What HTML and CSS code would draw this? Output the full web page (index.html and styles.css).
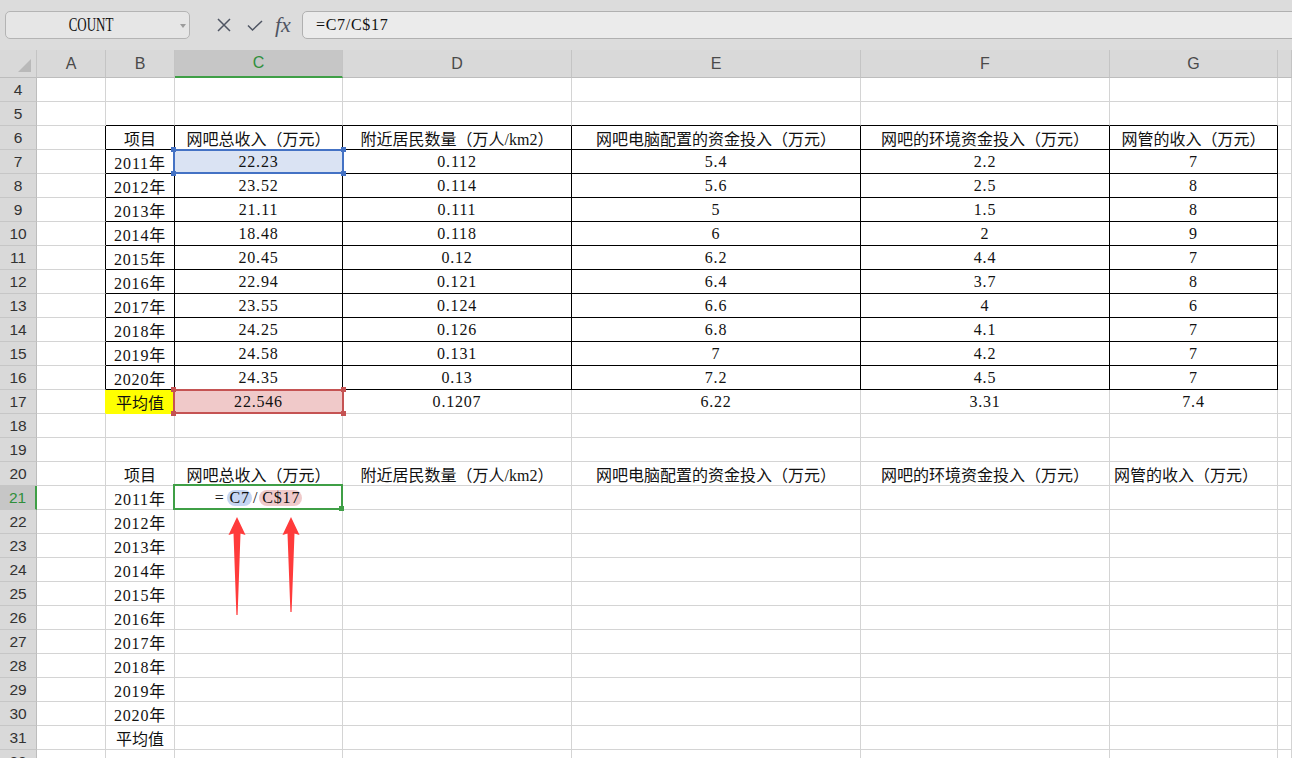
FILE: index.html
```html
<!DOCTYPE html>
<html lang="zh-CN">
<head>
<meta charset="utf-8">
<title>COUNT</title>
<link rel="stylesheet" href="styles.css">
</head>
<body>
<div class="app">
  <div class="toolbar">
    <div class="namebox"><span class="nb-text">COUNT</span><span class="nb-arrow"></span></div>
    <div class="tools">
      <svg class="ic-x" width="14" height="14" viewBox="0 0 14 14"><path d="M1 1 L13 13 M13 1 L1 13" stroke="#4f5563" stroke-width="1.5" fill="none"/></svg>
      <svg class="ic-ok" width="16" height="12" viewBox="0 0 16 12"><path d="M1 5.5 L5.5 10 L15 1" stroke="#4f5563" stroke-width="1.5" fill="none"/></svg>
      <span class="fx">fx</span>
    </div>
    <div class="formula">=C7/C$17</div>
  </div>

  <div class="g">
    <div class="h corner"><span class="tri"></span></div><div class="h">A</div><div class="h">B</div><div class="h hs">C</div><div class="h">D</div><div class="h">E</div><div class="h">F</div><div class="h">G</div><div class="h"></div>

    <div class="r">4</div><div class="c"></div><div class="c"></div><div class="c"></div><div class="c"></div><div class="c"></div><div class="c"></div><div class="c"></div><div class="c"></div>
    <div class="r">5</div><div class="c"></div><div class="c tt"></div><div class="c tt"></div><div class="c tt"></div><div class="c tt"></div><div class="c tt"></div><div class="c tt"></div><div class="c"></div>

    <div class="r">6</div><div class="c tl"></div><div class="c tb">项目</div><div class="c tb">网吧总收入（万元）</div><div class="c tb">附近居民数量（万人/km2）</div><div class="c tb">网吧电脑配置的资金投入（万元）</div><div class="c tb">网吧的环境资金投入（万元）</div><div class="c tb">网管的收入（万元）</div><div class="c"></div>

    <div class="r">7</div><div class="c tl"></div><div class="c tb n">2011年</div><div class="c tb n sel c7">22.23<div class="box blue"><i class="hd tl-h"></i><i class="hd tr-h"></i><i class="hd bl-h"></i><i class="hd br-h"></i></div></div><div class="c tb n">0.112</div><div class="c tb n">5.4</div><div class="c tb n">2.2</div><div class="c tb n">7</div><div class="c"></div>
    <div class="r">8</div><div class="c tl"></div><div class="c tb n">2012年</div><div class="c tb n">23.52</div><div class="c tb n">0.114</div><div class="c tb n">5.6</div><div class="c tb n">2.5</div><div class="c tb n">8</div><div class="c"></div>
    <div class="r">9</div><div class="c tl"></div><div class="c tb n">2013年</div><div class="c tb n">21.11</div><div class="c tb n">0.111</div><div class="c tb n">5</div><div class="c tb n">1.5</div><div class="c tb n">8</div><div class="c"></div>
    <div class="r">10</div><div class="c tl"></div><div class="c tb n">2014年</div><div class="c tb n">18.48</div><div class="c tb n">0.118</div><div class="c tb n">6</div><div class="c tb n">2</div><div class="c tb n">9</div><div class="c"></div>
    <div class="r">11</div><div class="c tl"></div><div class="c tb n">2015年</div><div class="c tb n">20.45</div><div class="c tb n">0.12</div><div class="c tb n">6.2</div><div class="c tb n">4.4</div><div class="c tb n">7</div><div class="c"></div>
    <div class="r">12</div><div class="c tl"></div><div class="c tb n">2016年</div><div class="c tb n">22.94</div><div class="c tb n">0.121</div><div class="c tb n">6.4</div><div class="c tb n">3.7</div><div class="c tb n">8</div><div class="c"></div>
    <div class="r">13</div><div class="c tl"></div><div class="c tb n">2017年</div><div class="c tb n">23.55</div><div class="c tb n">0.124</div><div class="c tb n">6.6</div><div class="c tb n">4</div><div class="c tb n">6</div><div class="c"></div>
    <div class="r">14</div><div class="c tl"></div><div class="c tb n">2018年</div><div class="c tb n">24.25</div><div class="c tb n">0.126</div><div class="c tb n">6.8</div><div class="c tb n">4.1</div><div class="c tb n">7</div><div class="c"></div>
    <div class="r">15</div><div class="c tl"></div><div class="c tb n">2019年</div><div class="c tb n">24.58</div><div class="c tb n">0.131</div><div class="c tb n">7</div><div class="c tb n">4.2</div><div class="c tb n">7</div><div class="c"></div>
    <div class="r">16</div><div class="c tl"></div><div class="c tb n">2020年</div><div class="c tb n">24.35</div><div class="c tb n">0.13</div><div class="c tb n">7.2</div><div class="c tb n">4.5</div><div class="c tb n">7</div><div class="c"></div>

    <div class="r">17</div><div class="c ay"></div><div class="c y">平均值</div><div class="c n sel c17">22.546<div class="box red"><i class="hd tl-h"></i><i class="hd tr-h"></i><i class="hd bl-h"></i><i class="hd br-h"></i></div></div><div class="c n">0.1207</div><div class="c n">6.22</div><div class="c n">3.31</div><div class="c n">7.4</div><div class="c"></div>

    <div class="r">18</div><div class="c"></div><div class="c"></div><div class="c"></div><div class="c"></div><div class="c"></div><div class="c"></div><div class="c"></div><div class="c"></div>
    <div class="r">19</div><div class="c"></div><div class="c"></div><div class="c"></div><div class="c"></div><div class="c"></div><div class="c"></div><div class="c"></div><div class="c"></div>

    <div class="r">20</div><div class="c"></div><div class="c">项目</div><div class="c">网吧总收入（万元）</div><div class="c">附近居民数量（万人/km2）</div><div class="c">网吧电脑配置的资金投入（万元）</div><div class="c">网吧的环境资金投入（万元）</div><div class="c left">网管的收入（万元）</div><div class="c"></div>

    <div class="r rs">21</div><div class="c"></div><div class="c n">2011年</div><div class="c n sel c21"><span class="eq">=</span><span class="ref rb">C7</span><span class="sl">/</span><span class="ref rp">C$17</span><div class="box green"><i class="hd br-g"></i></div></div><div class="c"></div><div class="c"></div><div class="c"></div><div class="c"></div><div class="c"></div>

    <div class="r">22</div><div class="c"></div><div class="c n">2012年</div><div class="c"></div><div class="c"></div><div class="c"></div><div class="c"></div><div class="c"></div><div class="c"></div>
    <div class="r">23</div><div class="c"></div><div class="c n">2013年</div><div class="c"></div><div class="c"></div><div class="c"></div><div class="c"></div><div class="c"></div><div class="c"></div>
    <div class="r">24</div><div class="c"></div><div class="c n">2014年</div><div class="c"></div><div class="c"></div><div class="c"></div><div class="c"></div><div class="c"></div><div class="c"></div>
    <div class="r">25</div><div class="c"></div><div class="c n">2015年</div><div class="c"></div><div class="c"></div><div class="c"></div><div class="c"></div><div class="c"></div><div class="c"></div>
    <div class="r">26</div><div class="c"></div><div class="c n">2016年</div><div class="c"></div><div class="c"></div><div class="c"></div><div class="c"></div><div class="c"></div><div class="c"></div>
    <div class="r">27</div><div class="c"></div><div class="c n">2017年</div><div class="c"></div><div class="c"></div><div class="c"></div><div class="c"></div><div class="c"></div><div class="c"></div>
    <div class="r">28</div><div class="c"></div><div class="c n">2018年</div><div class="c"></div><div class="c"></div><div class="c"></div><div class="c"></div><div class="c"></div><div class="c"></div>
    <div class="r">29</div><div class="c"></div><div class="c n">2019年</div><div class="c"></div><div class="c"></div><div class="c"></div><div class="c"></div><div class="c"></div><div class="c"></div>
    <div class="r">30</div><div class="c"></div><div class="c n">2020年</div><div class="c"></div><div class="c"></div><div class="c"></div><div class="c"></div><div class="c"></div><div class="c"></div>
    <div class="r">31</div><div class="c"></div><div class="c">平均值</div><div class="c"></div><div class="c"></div><div class="c"></div><div class="c"></div><div class="c"></div><div class="c"></div>
    <div class="r">32</div><div class="c"></div><div class="c"></div><div class="c"></div><div class="c"></div><div class="c"></div><div class="c"></div><div class="c"></div><div class="c"></div>
  </div>

  <svg class="arrows" width="1292" height="758" viewBox="0 0 1292 758">
    <path d="M237 517 L245.5 535 L240.5 533.5 L237.6 615 L236.4 615 L233.5 533.5 L228.5 535 Z" fill="#ff3b3b"/>
    <path d="M291 517 L299.5 535 L294.5 533.5 L291.6 612 L290.4 612 L287.5 533.5 L282.5 535 Z" fill="#ff3b3b"/>
  </svg>
</div>
</body>
</html>
```

FILE: styles.css
```css
html, body {
  margin: 0;
  padding: 0;
  width: 1292px;
  height: 758px;
  overflow: hidden;
  background: #ffffff;
}

.app {
  position: relative;
  width: 1292px;
  height: 758px;
  overflow: hidden;
}

/* ---------- top formula bar ---------- */
.toolbar {
  height: 50px;
  box-sizing: border-box;
  padding-top: 11px;
  background: #dcdcdc;
  display: flex;
  align-items: flex-start;
}

.namebox {
  position: relative;
  margin-left: 5px;
  width: 185px;
  height: 28px;
  box-sizing: border-box;
  border: 1px solid #b4b4b4;
  border-radius: 5px;
  background: #e6e6e6;
  display: flex;
  align-items: center;
  justify-content: center;
  padding-right: 14px;
}

.nb-text {
  display: inline-block;
  font-family: "Liberation Serif", serif;
  font-size: 18px;
  color: #111;
  transform: scaleX(0.72);
}

.nb-arrow {
  position: absolute;
  right: 3px;
  top: 12px;
  width: 0;
  height: 0;
  border-left: 3px solid transparent;
  border-right: 3px solid transparent;
  border-top: 4px solid #9c9c9c;
}

.tools {
  width: 112px;
  height: 28px;
  display: flex;
  align-items: center;
}

.ic-x { margin-left: 27px; }
.ic-ok { margin-left: 16px; margin-top: 2px; }

.fx {
  margin-left: 12px;
  font-family: "Liberation Serif", serif;
  font-style: italic;
  font-size: 22px;
  color: #4f5563;
  line-height: 28px;
}

.formula {
  flex: 1;
  height: 28px;
  box-sizing: border-box;
  margin-right: -10px;
  border: 1px solid #b0b0b0;
  border-radius: 5px 0 0 5px;
  background: #ebebeb;
  padding-left: 13px;
  font-family: "Liberation Serif", serif;
  font-size: 16px;
  letter-spacing: 0.7px;
  line-height: 26px;
  color: #111;
}

/* ---------- sheet grid ---------- */
.g {
  display: grid;
  grid-template-columns: 37px 69px 69px 168px 229px 289px 249px 168px 14px;
  grid-template-rows: 28px;
  grid-auto-rows: 24px;
}

.g > div {
  box-sizing: border-box;
  border-right: 1px solid #d4d4d4;
  border-bottom: 1px solid #d4d4d4;
  display: flex;
  align-items: center;
  justify-content: center;
  white-space: nowrap;
  min-width: 0;
  font-family: "Liberation Serif", "Noto Sans CJK SC", serif;
  font-size: 16px;
  color: #111;
}

.g > .h {
  background: #d9d9d9;
  border-right-color: #c4c4c4;
  border-bottom-color: #bdbdbd;
  font-family: "Liberation Sans", sans-serif;
  font-size: 16px;
  color: #4a4a4a;
}

.g > .corner {
  justify-content: flex-end;
  align-items: flex-end;
  padding: 0 5px 5px 0;
}

.tri {
  width: 0;
  height: 0;
  border-left: 13px solid transparent;
  border-bottom: 13px solid #b9b9b9;
}

.g > .hs {
  background: #c6c6c6;
  color: #2f8f3b;
  border-bottom: 2px solid #3f9f46;
}

.g > .r {
  background: #d9d9d9;
  border-right-color: #bdbdbd;
  border-bottom-color: #c6c6c6;
  font-family: "Liberation Sans", sans-serif;
  font-size: 15.5px;
  color: #333;
}

.g > .rs {
  background: #c6c6c6;
  color: #2f8f3b;
  border-right: 2px solid #3f9f46;
}

.g > .tb {
  border-right-color: #000;
  border-bottom-color: #000;
}

.g > .tl { border-right-color: #000; }
.g > .tt { border-bottom-color: #000; }

.g > .n { letter-spacing: 0.8px; }

.g > .left {
  justify-content: flex-start;
  padding-left: 4px;
}

.g > .y {
  background: #ffff00;
  border-bottom-color: #ffff00;
}

.g > .ay { border-right-color: #ffff00; }

.g > .c7 { background: #dae3f3; }
.g > .c17 { background: #f0c9c9; }

/* ---------- selection / reference overlays ---------- */
.sel { position: relative; }

.box {
  position: absolute;
  box-sizing: border-box;
  pointer-events: none;
  left: -2px;
  top: -1px;
  width: 171px;
  height: 25px;
  border: 2px solid #4472c4;
}

.box.red { border-color: #c55353; }

.box.green {
  top: -2px;
  width: 170px;
  height: 26px;
  border-color: #3f9f46;
}

.hd {
  position: absolute;
  width: 5px;
  height: 5px;
  background: #4472c4;
}

.red .hd { background: #c55353; }
.green .hd { background: #3f9f46; }

.tl-h { left: -4px; top: -4px; }
.tr-h { right: -4px; top: -4px; }
.bl-h { left: -4px; bottom: -4px; }
.br-h { right: -4px; bottom: -4px; }
.br-g { right: -3px; bottom: -3px; }

.eq { margin-right: 2px; }
.sl { margin: 0 2px 0 1px; letter-spacing: 0; }

.ref {
  display: inline-block;
  height: 16px;
  line-height: 16px;
  padding: 0 2px 0 3px;
  border-radius: 8px;
}

.rb { background: #c6d6f2; }
.rp { background: #efcaca; }

.arrows {
  position: absolute;
  left: 0;
  top: 0;
  pointer-events: none;
}
```
